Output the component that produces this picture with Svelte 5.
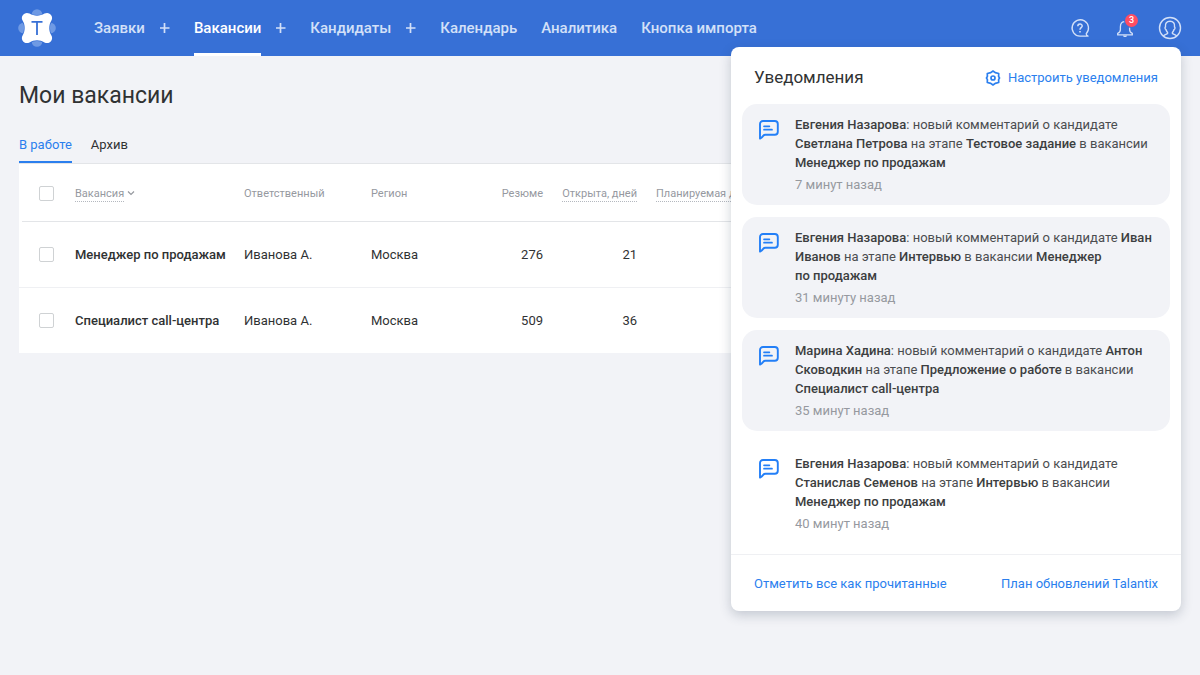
<script lang="ts">
  type Part = { text: string; strong?: boolean };
  type Notification = { id: number; parts: Part[]; time: string; unread: boolean };

  const menu = [
    { title: "Заявки", canAdd: true },
    { title: "Вакансии", canAdd: true },
    { title: "Кандидаты", canAdd: true },
    { title: "Календарь", canAdd: false },
    { title: "Аналитика", canAdd: false },
    { title: "Кнопка импорта", canAdd: false },
  ];

  const tabs = ["В работе", "Архив"];

  const vacancies = [
    { id: 1, name: "Менеджер по продажам", owner: "Иванова А.", region: "Москва", resumes: 276, days: 21 },
    { id: 2, name: "Специалист call-центра", owner: "Иванова А.", region: "Москва", resumes: 509, days: 36 },
  ];

  function comment(author: string, person: string, stage: string, vacancy: string): Part[] {
    return [
      { text: author, strong: true },
      { text: ": новый комментарий о кандидате " },
      { text: person, strong: true },
      { text: " на этапе " },
      { text: stage, strong: true },
      { text: " в вакансии " },
      { text: vacancy, strong: true },
    ];
  }

  let notifications = $state<Notification[]>([
    {
      id: 1,
      parts: comment("Евгения Назарова", "Светлана Петрова", "Тестовое задание", "Менеджер по\u00a0продажам"),
      time: "7 минут назад",
      unread: true,
    },
    {
      id: 2,
      parts: comment("Евгения Назарова", "Иван Иванов", "Интервью", "Менеджер по\u00a0продажам"),
      time: "31 минуту назад",
      unread: true,
    },
    {
      id: 3,
      parts: comment("Марина Хадина", "Антон Сководкин", "Предложение о работе", "Специалист call-центра"),
      time: "35 минут назад",
      unread: true,
    },
    {
      id: 4,
      parts: comment("Евгения Назарова", "Станислав Семенов", "Интервью", "Менеджер по\u00a0продажам"),
      time: "40 минут назад",
      unread: false,
    },
  ]);

  let activeMenu = $state("Вакансии");
  let activeTab = $state("В работе");
  let open = $state(true);
  let selected = $state<number[]>([]);

  let unreadCount = $derived(notifications.filter((n) => n.unread).length);

  function markAllRead() {
    for (const n of notifications) n.unread = false;
  }

  function toggleAll() {
    selected = selected.length === vacancies.length ? [] : vacancies.map((v) => v.id);
  }
</script>

<div class="page">
  <header class="topbar">
    <a class="logo" href="#home" aria-label="Talantix">
      <svg width="38" height="38" viewBox="0 0 38 38">
        <g fill="#6f9ae4">
          <circle cx="19" cy="5.5" r="5.3" />
          <circle cx="19" cy="32.5" r="5.3" />
          <circle cx="5.5" cy="19" r="5.3" />
          <circle cx="32.5" cy="19" r="5.3" />
        </g>
        <path
          d="M11.500 4.600C16 7.400 22 7.400 26.500 4.600C31 2 36 7 33.400 11.500C30.600 16 30.600 22 33.400 26.500C36 31 31 36 26.500 33.400C22 30.600 16 30.600 11.500 33.400C7 36 2 31 4.600 26.500C7.400 22 7.400 16 4.600 11.500C2 7 7 2 11.500 4.600Z"
          fill="#fff"
          stroke="#3770d6"
          stroke-width="1.6"
          paint-order="stroke"
        />
        <path d="M13.500 12.900h11M19 12.900v13.200" fill="none" stroke="#3770d6" stroke-width="1.8" />
      </svg>
    </a>

    <nav class="menu">
      {#each menu as item}
        <div class="menu-item">
          <a
            href="#{item.title}"
            class:active={activeMenu === item.title}
            onclick={() => (activeMenu = item.title)}>{item.title}</a
          >
          {#if item.canAdd}
            <button class="add" aria-label="Добавить: {item.title}">
              <svg width="10" height="10" viewBox="0 0 10 10">
                <path d="M4.500 0v10M-0.500 5h10" stroke="currentColor" stroke-width="1.700" />
              </svg>
            </button>
          {/if}
        </div>
      {/each}
    </nav>

    <div class="tools">
      <button aria-label="Помощь">
        <svg width="24" height="24" viewBox="0 0 24 24" fill="none" stroke="currentColor" stroke-width="1.300">
          <path
            d="M18.200 17.700A8.200 8.200 0 1 0 12 20.200H20C18.800 19.600 18.200 18.900 18.200 17.700Z"
            stroke-linejoin="round"
          />
          <path d="M9.800 10.200C9.800 7.300 14.200 7.300 14.200 10C14.200 11.600 12 11.800 12 13.700" stroke-width="1.500" />
          <path d="M12 14.900v1.600" stroke-width="1.600" />
        </svg>
      </button>
      <button class="bell" aria-label="Уведомления" onclick={() => (open = !open)}>
        <svg width="24" height="24" viewBox="0 0 24 24" fill="none" stroke="currentColor" stroke-width="1.300">
          <path
            d="M12 5.700C8.900 5.700 7.400 8 7.400 10.800V13.500C7.400 15.500 6.600 16.600 4.700 17.400V18.900H19.300V17.400C17.400 16.600 16.600 15.500 16.600 13.500V10"
            stroke-linejoin="round"
          />
          <path d="M9.900 19.500C10.300 21.500 13.700 21.500 14.100 19.500Z" fill="currentColor" stroke="none" />
        </svg>
        {#if unreadCount > 0}
          <span class="badge">{unreadCount}</span>
        {/if}
      </button>
      <button aria-label="Профиль">
        <svg width="24" height="24" viewBox="0 0 24 24" fill="none" stroke="currentColor" stroke-width="1.400">
          <circle cx="12" cy="12" r="10.500" />
          <path
            d="M5.300 20C6 18.300 9.600 18.300 9.700 17.100C9.800 16 8.300 15.500 8 13.600C6.900 13.200 6.700 11.300 7.500 10.900C7 7.300 8.700 5.300 12 5.300S17 7.300 16.500 10.900C17.300 11.300 17.100 13.200 16 13.600C15.700 15.500 14.200 16 14.300 17.100C14.400 18.300 18 18.300 18.700 20"
          />
        </svg>
      </button>
    </div>

    {#if open}
      <section class="popup" aria-label="Уведомления">
        <div class="popup-head">
          <h2>Уведомления</h2>
          <a href="#settings">
            <svg width="16" height="16" viewBox="0 0 16 16" fill="none" stroke="currentColor" stroke-width="1.700">
              <path
                d="M8 1L10.200 2.600L13.700 3.500L13.600 6.400L14.500 8L13.600 9.600L13.700 12.500L10.200 13.400L8 15L5.800 13.400L2.300 12.500L2.400 9.600L1.500 8L2.400 6.400L2.300 3.500L5.800 2.600Z"
                stroke-linejoin="round"
              />
              <circle cx="8" cy="8" r="2" />
            </svg>
            Настроить уведомления
          </a>
        </div>

        <ul class="list">
          {#each notifications as n (n.id)}
            <li class:unread={n.unread}>
              <svg width="20" height="20" viewBox="0 0 20 20" fill="none" stroke="currentColor" stroke-width="1.900">
                <path
                  d="M1 18.600V4C1 2.200 2.200 1 4 1H15.800C17.600 1 18.800 2.200 18.800 4V11.800C18.800 13.600 17.600 14.800 15.800 14.800H6.400C5.300 14.800 4.800 15.100 4.200 15.900C3.300 17.100 2.400 17.900 1 18.600Z"
                  stroke-linejoin="round"
                />
                <path d="M5 6.300h5.400M5 9.700h8" stroke-linecap="round" stroke-width="1.700" />
              </svg>
              <div>
                <p>{#each n.parts as part}{#if part.strong}<b>{part.text}</b>{:else}{part.text}{/if}{/each}</p>
                <time>{n.time}</time>
              </div>
            </li>
          {/each}
        </ul>

        <div class="popup-foot">
          <button onclick={markAllRead}>Отметить все как прочитанные</button>
          <a href="#plan">План обновлений Talantix</a>
        </div>
      </section>
    {/if}
  </header>

  <main>
    <h1>Мои вакансии</h1>

    <div class="tabs" role="tablist">
      {#each tabs as tab}
        <button
          role="tab"
          aria-selected={activeTab === tab}
          class:active={activeTab === tab}
          onclick={() => (activeTab = tab)}>{tab}</button
        >
      {/each}
    </div>

    <div class="table-wrap">
      <table>
        <thead>
          <tr>
            <th class="check">
              <input
                type="checkbox"
                aria-label="Выбрать все"
                checked={selected.length === vacancies.length}
                onchange={toggleAll}
              />
            </th>
            <th class="name">
              <button class="sort">Вакансия</button>
              <svg width="8" height="6" viewBox="0 0 8 6" fill="none" stroke="currentColor">
                <path d="M1 1.500l3 3l3-3" stroke-width="1.200" />
              </svg>
            </th>
            <th class="owner">Ответственный</th>
            <th class="region">Регион</th>
            <th class="resumes num">Резюме</th>
            <th class="days num"><button class="sort">Открыта, дней</button></th>
            <th class="plan"><button class="sort">Планируемая дата</button></th>
          </tr>
        </thead>
        <tbody>
          {#each vacancies as v (v.id)}
            <tr>
              <td class="check">
                <input type="checkbox" aria-label={v.name} value={v.id} bind:group={selected} />
              </td>
              <td><a href="#vacancy-{v.id}">{v.name}</a></td>
              <td>{v.owner}</td>
              <td>{v.region}</td>
              <td class="num">{v.resumes}</td>
              <td class="num">{v.days}</td>
              <td></td>
            </tr>
          {/each}
        </tbody>
      </table>
    </div>
  </main>
</div>

<style>
  :global(body) {
    background: #f2f3f7;
    color: #303233;
    font: 13px/19px Roboto, "Liberation Sans", sans-serif;
  }

  .page {
    min-height: 100vh;
  }

  button {
    padding: 0;
    border: 0;
    background: none;
    color: inherit;
    font: inherit;
    cursor: pointer;
  }

  a {
    color: inherit;
    text-decoration: none;
  }

  svg {
    display: block;
    flex-shrink: 0;
  }

  .topbar {
    position: relative;
    display: flex;
    align-items: center;
    height: 56px;
    padding: 0 18px;
    background: #3770d6;
    color: #d3e0f8;
  }

  .logo {
    margin-right: 38px;
  }

  .menu {
    display: flex;
    align-self: stretch;
    gap: 24px;
    font-size: 15px;
    font-weight: 500;
    white-space: nowrap;
  }

  .menu-item {
    display: flex;
    align-items: center;
    gap: 15px;
  }

  .menu-item a {
    display: flex;
    align-items: center;
    box-sizing: border-box;
    height: 100%;
    border-top: 3px solid transparent;
    border-bottom: 3px solid transparent;
  }

  .menu-item a.active {
    border-bottom-color: #fff;
    color: #fff;
  }

  .tools {
    display: flex;
    gap: 21px;
    margin-left: auto;
  }

  .bell {
    position: relative;
  }

  .badge {
    position: absolute;
    top: -2px;
    right: -1px;
    width: 13px;
    height: 13px;
    border-radius: 50%;
    background: #ff4d63;
    box-shadow: 0 0 0 1px #3770d6;
    color: #fff;
    font-size: 9px;
    font-weight: 500;
    line-height: 13px;
    text-align: center;
  }

  .popup {
    position: absolute;
    z-index: 1;
    top: 47px;
    right: 19px;
    width: 450px;
    border-radius: 8px;
    background: #fff;
    box-shadow: 0 4px 12px rgba(46, 64, 89, 0.24);
    color: #4b4d50;
  }

  .popup-head,
  .popup-foot {
    display: flex;
    align-items: center;
    justify-content: space-between;
    padding: 0 23px;
    color: #2b7fee;
  }

  .popup-head {
    box-sizing: border-box;
    height: 57px;
    padding-top: 4px;
  }

  .popup-head a {
    display: flex;
    align-items: center;
    gap: 7px;
  }

  h2 {
    margin: 0;
    color: #303233;
    font-size: 17px;
    font-weight: 400;
  }

  .popup-foot {
    height: 56px;
    border-top: 1px solid #eff0f3;
  }

  .list {
    display: grid;
    gap: 12px;
    margin: 0;
    padding: 0 11px 10px;
    list-style: none;
  }

  .list li {
    display: flex;
    gap: 16px;
    padding: 11px 12px 11px 17px;
    border-radius: 15px;
  }

  .list li.unread {
    background: #f2f3f7;
  }

  .list svg {
    margin-top: 5px;
    color: #237ff7;
  }

  .list p {
    margin: 0 0 3px;
  }

  .list b {
    font-weight: 500;
    color: #3c3e40;
  }

  time {
    display: block;
    color: #96999f;
  }

  main {
    padding: 26px 19px;
  }

  h1 {
    margin: 0;
    font-size: 23px;
    font-weight: 400;
    line-height: 28px;
  }

  .tabs {
    display: flex;
    gap: 19px;
    margin-top: 16px;
  }

  .tabs button {
    height: 37px;
    padding-top: 2px;
    border-bottom: 2px solid transparent;
  }

  .tabs button.active {
    border-bottom-color: #2b7fee;
    color: #2b7fee;
  }

  .table-wrap {
    overflow: hidden;
    border-top: 1px solid #e3e5e8;
    background: #fff;
  }

  table {
    width: 100%;
    border-collapse: collapse;
    table-layout: fixed;
  }

  thead tr {
    background: linear-gradient(#e3e5e8, #e3e5e8) 3px 100% / 100% 1px no-repeat;
  }

  th,
  td {
    padding: 0;
    text-align: left;
    white-space: nowrap;
  }

  th {
    height: 58px;
    color: #96999f;
    font-size: 11px;
    font-weight: 400;
  }

  td {
    height: 65px;
    line-height: 20px;
  }

  tbody tr + tr td {
    border-top: 1px solid #eff0f3;
  }

  td a {
    font-weight: 500;
  }

  .num {
    padding-right: 19px;
    text-align: right;
  }

  .check {
    width: 56px;
  }

  .name {
    width: 169px;
  }

  .owner {
    width: 127px;
  }

  .region {
    width: 100px;
  }

  .resumes {
    width: 72px;
  }

  .days {
    width: 75px;
  }

  .sort {
    border-bottom: 1px dotted #b4b8bf;
    line-height: 15px;
  }

  .name svg {
    display: inline-block;
    vertical-align: 1px;
  }

  input {
    display: block;
    width: 15px;
    height: 15px;
    margin: 0 0 0 20px;
    border: 1px solid #cfd2d4;
    border-radius: 2px;
    background: #fff;
    appearance: none;
  }

  input:checked {
    border-color: #2b7fee;
    background: #2b7fee;
    box-shadow: inset 0 0 0 2px #fff;
  }
</style>
